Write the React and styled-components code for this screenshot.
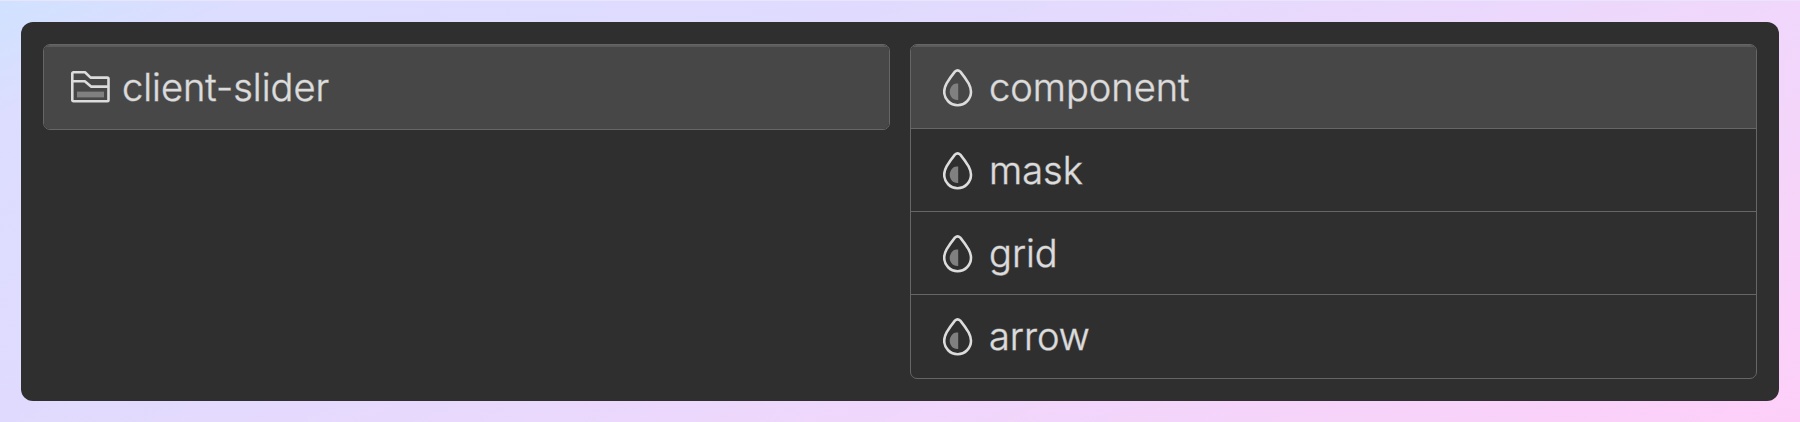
import React from "react";
import styled, { createGlobalStyle } from "styled-components";

const GlobalStyle = createGlobalStyle`
	* {
		box-sizing: border-box;
	}

	body {
		margin: 0;
		background: #e0dbfe;
	}
`;

const folders = ["client-slider"];
const parts = ["component", "mask", "grid", "arrow"];

const FolderIcon = () => (
	<S.FolderSvg viewBox="0 -1 39 34" aria-hidden="true">
		<path d="M1.3 2.5Q1.3 1.3 2.5 1.3H14L19.6 6.6H36.3Q37.5 6.6 37.5 7.8V29Q37.5 30.2 36.3 30.2H2.5Q1.3 30.2 1.3 29Z" />
		<path d="M1.3 10.2H13.8L20 15.6H37.5" />
		<rect className="fill" x="6" y="20.6" width="27" height="5.8" />
	</S.FolderSvg>
);

const DropIcon = () => (
	<S.DropSvg viewBox="0 -2 30 40" aria-hidden="true">
		<path d="M11.9 2.6Q14.6 0 17.3 2.6Q22 8.4 25.6 14.4Q28 18.8 28 22.8A13.4 13.4 0 0 1 1.2 22.8Q1.2 18.8 3.6 14.4Q7.2 8.4 11.9 2.6Z" />
		<path
			className="fill"
			d="M15.2 14.6V31C12.4 31.2 10 30 8.6 28.2C7.2 26.4 6.4 24.2 6.8 21.6C7.4 18.6 8.8 16.6 11 15Q12.8 14 15.2 14.6Z"
		/>
	</S.DropSvg>
);

const App = () => {
	return (
		<S.Page>
			<GlobalStyle />
			<S.Panel>
				<S.List>
					{folders.map((name) => (
						<S.Item key={name} $active>
							<S.Row type="button" $inset={27} $gap={12}>
								<FolderIcon />
								{name}
							</S.Row>
						</S.Item>
					))}
				</S.List>
				<S.List>
					{parts.map((name, i) => (
						<S.Item key={name} $active={i === 0}>
							<S.Row type="button" $inset={32} $gap={16}>
								<DropIcon />
								{name}
							</S.Row>
						</S.Item>
					))}
				</S.List>
			</S.Panel>
		</S.Page>
	);
};

const S = {
	Page: styled.main`
		min-height: 100vh;
		padding: 21px;
		border-top: 1px solid #e9e5fd;
		background: linear-gradient(
			155deg,
			#d0e2ff 0%,
			#dcddff 9%,
			#e0dbfe 33%,
			#f0d7fb 67%,
			#fdcff8 100%
		);
	`,
	Panel: styled.section`
		display: grid;
		grid-template-columns: 1fr 1fr;
		align-items: start;
		gap: 20px;
		padding: 22px;
		border-radius: 12px;
		background: #2f2f2f;
	`,
	List: styled.ul`
		margin: 0;
		padding: 0;
		overflow: hidden;
		list-style: none;
		border: 1px solid #666;
		border-radius: 7px;
	`,
	Item: styled.li`
		background: ${(props) => (props.$active ? "#474747" : "transparent")};
		box-shadow: ${(props) => (props.$active ? "inset 0 2px #5c5c5c" : "none")};

		& + & {
			border-top: 1px solid #666;
		}

		&:first-child {
			padding-top: 1px;
		}

		&:last-child {
			padding-bottom: 1px;
		}
	`,
	Row: styled.button`
		display: flex;
		align-items: center;
		gap: ${(props) => props.$gap}px;
		width: 100%;
		height: 82px;
		padding: 0 ${(props) => props.$inset}px;
		border: 0;
		background: transparent;
		color: #dcdcdc;
		font-family: Inter, sans-serif;
		font-size: 38px;
		font-weight: 300;
		line-height: 48px;
		text-align: left;
		cursor: pointer;
		// light is a bit too thin on the dark rows
		-webkit-text-stroke: 1px rgba(220, 220, 220, 0.5);
	`,
	Svg: styled.svg`
		flex: none;
		fill: none;
		stroke: #dcdcdc;
		stroke-width: 2.6;
		stroke-linejoin: round;

		.fill {
			fill: #808080;
			stroke: none;
		}
	`,
};

S.FolderSvg = styled(S.Svg)`
	width: 39px;
	height: 34px;
`;

S.DropSvg = styled(S.Svg)`
	width: 30px;
	height: 40px;
`;

export default App;
